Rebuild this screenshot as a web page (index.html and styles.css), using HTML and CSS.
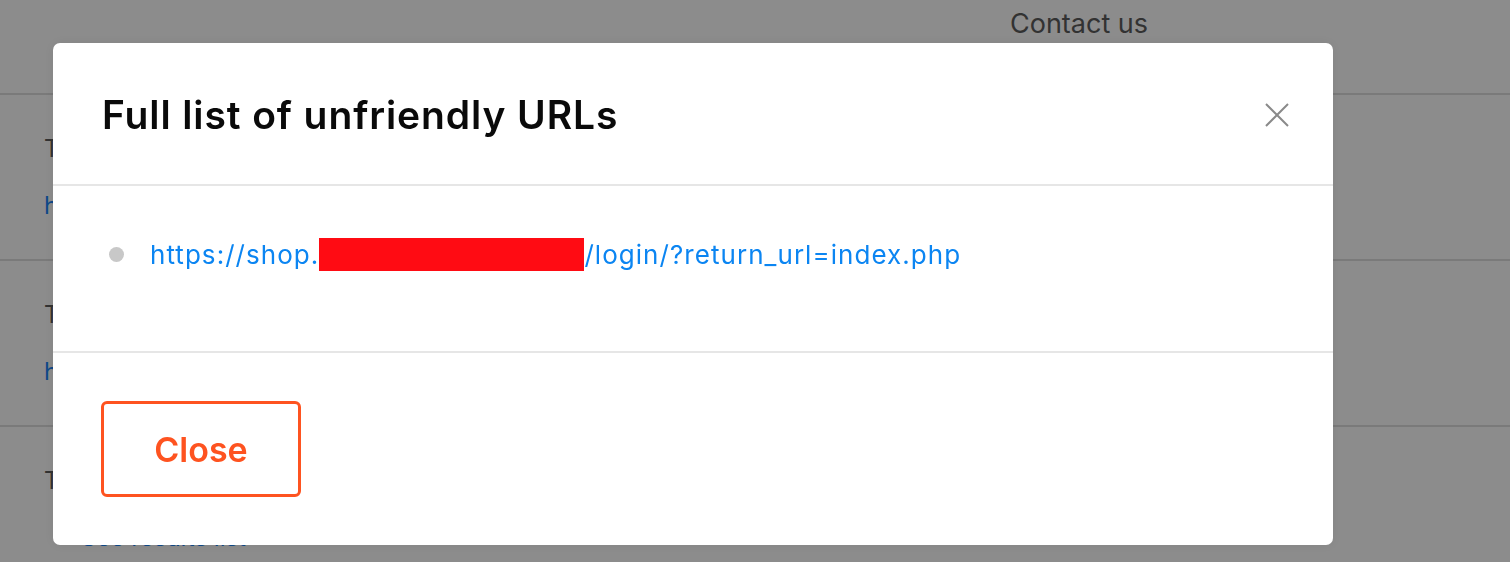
FILE: index.html
```html
<!DOCTYPE html>
<html lang="en">
<head>
<meta charset="utf-8">
<title>Unfriendly URLs</title>
<link rel="stylesheet" href="styles.css">
</head>
<body>
<div class="page">
  <header class="top">
    <span class="contact">Contact us</span>
  </header>
  <section class="row">
    <p class="row-title">The page contains unfriendly URLs</p>
    <a class="row-link" href="#">https://shop.example.com/login/?return_url=index.php</a>
  </section>
  <section class="row">
    <p class="row-title">The page contains unfriendly URLs</p>
    <a class="row-link" href="#">https://shop.example.com/login/?return_url=index.php</a>
  </section>
  <section class="row">
    <p class="row-title">The page contains unfriendly URLs</p>
    <a class="row-more" href="#"><span class="tri">&#9654;</span>See results list</a>
  </section>
</div>

<div class="overlay">
  <div class="modal" role="dialog">
    <div class="modal-header">
      <h2 class="modal-title">Full list of unfriendly URLs</h2>
      <button class="modal-x" aria-label="Close">
        <svg width="26" height="26" viewBox="0 0 26 26"><path d="M2 2 L24 24 M24 2 L2 24" stroke="#8a8a8a" stroke-width="2" fill="none"/></svg>
      </button>
    </div>
    <div class="modal-body">
      <ul class="url-list">
        <li><a href="#" class="url">https://shop.<span class="redact"></span>/login/?return_url=index.php</a></li>
      </ul>
    </div>
    <div class="modal-footer">
      <button class="btn-close">Close</button>
    </div>
  </div>
</div>
</body>
</html>
```

FILE: styles.css
```css
* { box-sizing: border-box; }
html, body { margin: 0; padding: 0; }
body {
  width: 1510px;
  height: 562px;
  overflow: hidden;
  background: #fff;
  font-family: Inter, "Noto Sans", sans-serif;
  color: #5a5a5a;
}
.page {
  display: flex;
  flex-direction: column;
  height: 562px;
  overflow: hidden;
}
.top {
  height: 95px;
  flex: none;
  border-bottom: 2px solid #dedede;
  display: flex;
  justify-content: flex-start;
  padding-left: 1010px;
  padding-top: 7px;
}
.contact {
  font-size: 27px;
  line-height: 34px;
  color: #5c5c5c;
}
.row {
  height: 166px;
  flex: none;
  border-bottom: 2px solid #dedede;
  padding: 39px 0 0 44px;
  display: flex;
  flex-direction: column;
  gap: 28px;
}
.row-title { margin: 0; font-size: 24px; line-height: 29px; color: #5c5c5c; }
.row-link { font-size: 24px; line-height: 29px; color: #1a84f7; text-decoration: none; }
.row-more { font-size: 24px; line-height: 29px; color: #1a84f7; text-decoration: none; display: flex; align-items: center; gap: 16px; padding-left: 10px; }
.tri { font-size: 12px; }

.overlay {
  position: fixed;
  inset: 0;
  background: rgba(0, 0, 0, 0.45);
  padding: 43px 0 0 53px;
}
.modal {
  width: 1280px;
  height: 502px;
  background: #fff;
  border-radius: 7px;
  display: flex;
  flex-direction: column;
  box-shadow: 0 0 12px rgba(0,0,0,0.08);
}
.modal-header {
  height: 143px;
  flex: none;
  border-bottom: 2px solid #e6e6e6;
  display: flex;
  align-items: center;
  justify-content: space-between;
  padding: 2px 43px 0 49px;
}
.modal-title {
  margin: 0;
  font-size: 39px;
  font-weight: 600;
  color: #0a0a0a;
  letter-spacing: 0.9px;
}
.modal-x {
  border: 0;
  background: none;
  padding: 0;
  width: 26px;
  height: 26px;
  cursor: pointer;
}
.modal-body {
  height: 167px;
  flex: none;
  border-bottom: 2px solid #e6e6e6;
  padding: 52px 0 0 56px;
}
.url-list {
  margin: 0;
  padding: 0;
  list-style: none;
}
.url-list li {
  display: flex;
  align-items: center;
  gap: 26px;
}
.url-list li::before {
  content: "";
  width: 15px;
  height: 15px;
  border-radius: 50%;
  background: #c8c8c8;
  flex: none;
}
.url {
  font-size: 26px;
  letter-spacing: 1.05px;
  color: #0b85f2;
  text-decoration: none;
  display: flex;
  align-items: center;
}
.redact {
  display: inline-block;
  width: 265px;
  height: 33px;
  background: #ff0b13;
}
.modal-footer {
  flex: 1;
  padding: 48px 0 0 48px;
}
.btn-close {
  width: 200px;
  height: 96px;
  border: 3px solid #fe5320;
  border-radius: 6px;
  background: #fff;
  color: #fe5320;
  font-family: Inter, "Noto Sans", sans-serif;
  font-size: 34px;
  font-weight: 600;
  cursor: pointer;
}
```
